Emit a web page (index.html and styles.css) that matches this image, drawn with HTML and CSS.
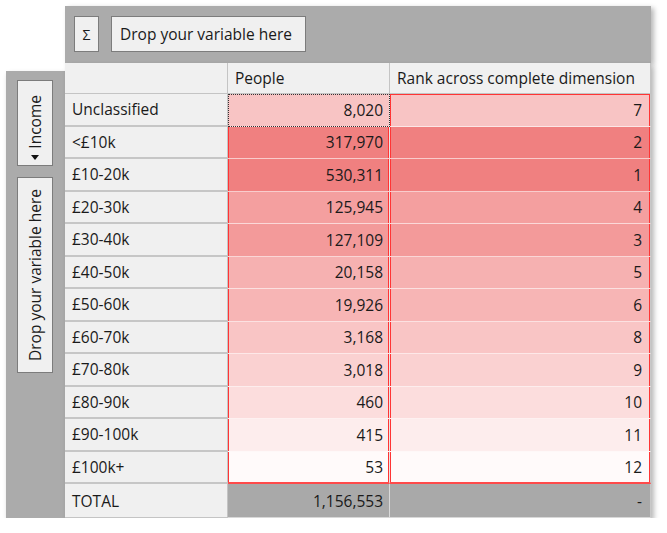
FILE: index.html
```html
<!DOCTYPE html>
<html>
<head>
<meta charset="utf-8">
<link rel="stylesheet" href="styles.css">
</head>
<body>
<div class="frame">
  <div class="corner"></div>
  <div class="topbar">
    <div class="btn sigma">Σ</div>
    <div class="btn drop">Drop your variable here</div>
  </div>
  <div class="sidebar">
    <div class="vbtn income">
      <span class="vtext">Income</span>
      <span class="tri"></span>
    </div>
    <div class="vbtn vdrop">
      <span class="vtext">Drop your variable here</span>
    </div>
  </div>
  <div class="grid">
    <div class="cell head"></div>
    <div class="cell head">People</div>
    <div class="cell head last">Rank across complete dimension</div>

    <div class="cell label">Unclassified</div>
    <div class="cell num c2 focus" style="background:#f8c4c4">8,020</div>
    <div class="cell num c3 top" style="background:#f8c4c4">7</div>

    <div class="cell label">&lt;£10k</div>
    <div class="cell num c2 first" style="background:#f08080">317,970</div>
    <div class="cell num c3" style="background:#f08080">2</div>

    <div class="cell label">£10-20k</div>
    <div class="cell num c2" style="background:#f08080">530,311</div>
    <div class="cell num c3" style="background:#f08080">1</div>

    <div class="cell label">£20-30k</div>
    <div class="cell num c2" style="background:#f49f9f">125,945</div>
    <div class="cell num c3" style="background:#f49f9f">4</div>

    <div class="cell label">£30-40k</div>
    <div class="cell num c2" style="background:#f39a9a">127,109</div>
    <div class="cell num c3" style="background:#f39a9a">3</div>

    <div class="cell label">£40-50k</div>
    <div class="cell num c2" style="background:#f6b1b1">20,158</div>
    <div class="cell num c3" style="background:#f6b1b1">5</div>

    <div class="cell label">£50-60k</div>
    <div class="cell num c2" style="background:#f7b5b5">19,926</div>
    <div class="cell num c3" style="background:#f7b5b5">6</div>

    <div class="cell label">£60-70k</div>
    <div class="cell num c2" style="background:#f9c5c5">3,168</div>
    <div class="cell num c3" style="background:#f9c5c5">8</div>

    <div class="cell label">£70-80k</div>
    <div class="cell num c2" style="background:#fad1d1">3,018</div>
    <div class="cell num c3" style="background:#fad1d1">9</div>

    <div class="cell label">£80-90k</div>
    <div class="cell num c2" style="background:#fcdddd">460</div>
    <div class="cell num c3" style="background:#fcdddd">10</div>

    <div class="cell label">£90-100k</div>
    <div class="cell num c2" style="background:#fdeded">415</div>
    <div class="cell num c3" style="background:#fdeded">11</div>

    <div class="cell label">£100k+</div>
    <div class="cell num c2 bottom" style="background:#fffafa">53</div>
    <div class="cell num c3 bottom" style="background:#fffafa">12</div>

    <div class="cell label total">TOTAL</div>
    <div class="cell num tot">1,156,553</div>
    <div class="cell num tot last">-</div>
  </div>
</div>
</body>
</html>
```
FILE: styles.css
```css
* { box-sizing: border-box; }
body {
  margin: 0;
  background: #ffffff;
  font-family: "Open Sans", "Noto Sans", sans-serif;
  font-size: 15.5px;
  color: #1a1a1a;
}
.frame {
  margin: 6px 0 0 6px;
  display: grid;
  grid-template-columns: 59px 586px;
  grid-template-rows: 57px auto;
}
.corner { grid-column: 1; grid-row: 1; }
.topbar {
  grid-column: 2; grid-row: 1;
  background: #ababab;
  display: flex;
  align-items: flex-start;
  gap: 12px;
  padding: 10px 9px;
  box-shadow: 3px 2px 5px rgba(0,0,0,0.28);
}
.btn {
  height: 36px;
  background: #f0f0f0;
  border: 1px solid #7c7c7c;
  display: flex;
  align-items: center;
  justify-content: center;
}
.sigma { width: 25px; font-size: 14px; }
.drop { width: 195px; justify-content: flex-start; padding-left: 8px; }
.sidebar {
  grid-column: 1; grid-row: 2;
  margin-top: 8px;
  background: #ababab;
  padding: 9px 12px 0 11px;
  display: flex;
  flex-direction: column;
  gap: 11px;
  box-shadow: 2px 3px 5px rgba(0,0,0,0.28);
}
.vbtn {
  width: 36px;
  background: #f0f0f0;
  border: 1px solid #7c7c7c;
  display: flex;
  flex-direction: column;
  align-items: center;
}
.vtext {
  writing-mode: vertical-rl;
  transform: rotate(180deg);
  white-space: nowrap;
  line-height: 34px;
}
.income {
  height: 86px;
  padding: 14px 0 5px;
  justify-content: space-between;
}
.vdrop {
  height: 196px;
  justify-content: center;
}
.tri {
  width: 0; height: 0;
  border-left: 4px solid transparent;
  border-right: 4px solid transparent;
  border-top: 5px solid #111;
}
.grid {
  grid-column: 2; grid-row: 2;
  display: grid;
  grid-template-columns: 163px 162px 261px;
  grid-template-rows: 31px repeat(12, 32.5px) 34px;
  box-shadow: 3px 3px 5px rgba(0,0,0,0.28);
  background: #f0f0f0;
}
.cell {
  display: flex;
  align-items: center;
  white-space: nowrap;
  padding: 0 7px;
  border-right: 1px solid #cfcfcf;
  border-bottom: 1px solid rgba(255,255,255,0.6);
}
.head {
  background: #f0f0f0;
  border-bottom: 1px solid #c4c4c4;
  border-right: 1px solid #c4c4c4;
  padding-bottom: 1px;
}
.label {
  background: #f0f0f0;
  border-bottom: 2px solid #c6c6c6;
  border-right: 1px solid #c4c4c4;
}
.num { justify-content: flex-end; }
.c2 {
  padding-right: 6px;
  border-right: 1px solid #e6e6e6;
  box-shadow: inset 1px 0 #ff3535, inset -1px 0 #ff3535;
}
.c3 {
  padding-right: 8px;
  border-right: 1px solid #c8c8c8;
  box-shadow: inset 1px 0 #ff3535, inset -1px 0 #ff3535;
}
.c3.top {
  box-shadow: inset 1px 0 #ff3535, inset -1px 0 #ff3535, inset 0 1px #ff3535;
}
.c2.bottom, .c3.bottom {
  border-bottom: 2px solid #ff4a4a;
}
.c2.first {
  box-shadow: inset 1px 0 #ff3535, inset -1px 0 #ff3535;
}
.focus {
  box-shadow: none;
  outline: 1px dotted #333;
  outline-offset: -1px;
}
.total {
  border-bottom: 1px solid #c4c4c4;
}
.tot {
  background: #a9a9a9;
  padding-right: 6px;
  border-right: 1px solid #dadada;
  border-bottom: 1px solid #d8d8d8;
}
.tot.last { padding-right: 8px; border-right: 1px solid #c8c8c8; }
```
